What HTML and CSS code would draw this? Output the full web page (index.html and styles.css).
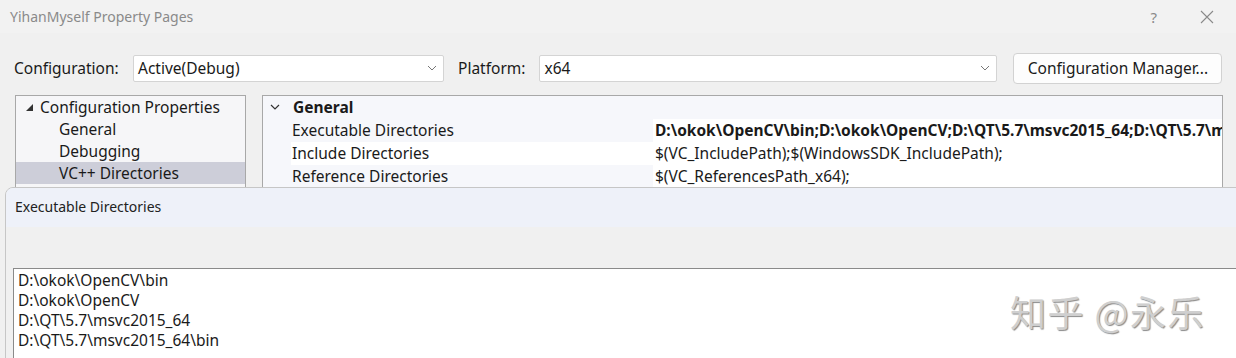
FILE: index.html
```html
<!DOCTYPE html>
<html lang="en">
<head>
  <meta charset="UTF-8">
  <title>YihanMyself Property Pages</title>
  <link rel="stylesheet" href="styles.css">
</head>
<body>
<div class="window">
  <div class="titlebar">
    <span class="title">YihanMyself Property Pages</span>
    <span class="help">?</span>
    <svg class="close" width="16" height="16" viewBox="0 0 16 16"><path d="M2 2L14 14M14 2L2 14" stroke="#8a8a8a" stroke-width="1.1" fill="none"/></svg>
  </div>

  <div class="config-row">
    <span class="lbl">Configuration:</span>
    <div class="select sel-config">
      <span>Active(Debug)</span>
      <svg width="10" height="6" viewBox="0 0 10 6"><path d="M1 1L5 5L9 1" stroke="#777" stroke-width="1" fill="none"/></svg>
    </div>
    <span class="lbl lbl-platform">Platform:</span>
    <div class="select sel-platform">
      <span>x64</span>
      <svg width="10" height="6" viewBox="0 0 10 6"><path d="M1 1L5 5L9 1" stroke="#777" stroke-width="1" fill="none"/></svg>
    </div>
    <button class="cfg-btn">Configuration Manager...</button>
  </div>

  <div class="panels">
    <div class="tree">
      <div class="node root">
        <svg width="9" height="9" viewBox="0 0 9 9"><polygon points="8,1 8,8 1,8" fill="#333"/></svg>
        <span>Configuration Properties</span>
      </div>
      <div class="node child">General</div>
      <div class="node child">Debugging</div>
      <div class="node child selected">VC++ Directories</div>
    </div>
    <div class="props">
      <div class="group">
        <svg width="10" height="6" viewBox="0 0 10 6"><path d="M1 1L5 5L9 1" stroke="#333" stroke-width="1.2" fill="none"/></svg>
        <span>General</span>
      </div>
      <div class="prow">
        <div class="pname">Executable Directories</div>
        <div class="pval bold">D:\okok\OpenCV\bin;D:\okok\OpenCV;D:\QT\5.7\msvc2015_64;D:\QT\5.7\m</div>
      </div>
      <div class="prow white">
        <div class="pname">Include Directories</div>
        <div class="pval">$(VC_IncludePath);$(WindowsSDK_IncludePath);</div>
      </div>
      <div class="prow">
        <div class="pname">Reference Directories</div>
        <div class="pval">$(VC_ReferencesPath_x64);</div>
      </div>
    </div>
  </div>

  <div class="dialog">
    <div class="dlg-head">Executable Directories</div>
    <div class="dlg-band"></div>
    <div class="editor">
      <div>D:\okok\OpenCV\bin</div>
      <div>D:\okok\OpenCV</div>
      <div>D:\QT\5.7\msvc2015_64</div>
      <div>D:\QT\5.7\msvc2015_64\bin</div>
    </div>
  </div>

  <div class="watermark">知乎 @永乐</div>
</div>
</body>
</html>
```

FILE: styles.css
```css
body {
  margin: 0;
  background: #f0f0f0;
  font-family: "Noto Sans", "Open Sans", sans-serif;
  color: #1a1a1a;
}
.window {
  position: relative;
  width: 1236px;
  height: 358px;
  overflow: hidden;
  background: #f0f0f0;
}
.titlebar {
  height: 33px;
  display: flex;
  align-items: center;
  padding-left: 10px;
  background: #f2f2f2;
}
.title {
  font-size: 14px;
  color: #8a8a8a;
  flex: 1;
}
.help {
  font-size: 15px;
  color: #8a8a8a;
  margin-right: 42px;
}
.close {
  margin-right: 21px;
}
.config-row {
  display: flex;
  align-items: center;
  height: 32px;
  margin-top: 19px;
  padding-left: 14px;
  font-size: 15.5px;
}
.lbl {
  width: 119px;
}
.lbl-platform {
  width: auto;
  margin-left: 14px;
  margin-right: 14px;
}
.select {
  height: 27px;
  box-sizing: border-box;
  background: #fff;
  border: 1px solid #d4d4d4;
  border-radius: 2px;
  display: flex;
  align-items: center;
  justify-content: space-between;
  padding: 0 6px 0 4px;
}
.sel-config { width: 311px; }
.sel-platform { width: 458px; }
.cfg-btn {
  margin-left: 16px;
  width: 209px;
  height: 31px;
  background: #fdfdfd;
  border: 1px solid #d2d2d2;
  border-radius: 4px;
  font-family: inherit;
  font-size: 15.5px;
  color: #1a1a1a;
  padding: 0;
}
.panels {
  display: flex;
  margin-top: 11px;
  padding-left: 15px;
  gap: 16px;
  height: 110px;
}
.tree {
  width: 231px;
  box-sizing: border-box;
  background: #f6f6f8;
  border: 1px solid #a8a8a8;
  font-size: 15.5px;
}
.node {
  height: 22px;
  line-height: 22px;
  white-space: nowrap;
}
.root {
  display: flex;
  align-items: center;
  padding-left: 9px;
  gap: 6px;
}
.child {
  padding-left: 43px;
}
.selected {
  background: #cdced9;
}
.props {
  width: 961px;
  box-sizing: border-box;
  background: #f6f7fb;
  border: 1px solid #a8a8a8;
  font-size: 15.5px;
}
.group {
  height: 21px;
  display: flex;
  align-items: center;
  padding-left: 7px;
  gap: 13px;
  font-weight: bold;
  margin-bottom: 2px;
}
.prow {
  display: flex;
  height: 23px;
  line-height: 23px;
  white-space: nowrap;
  margin-left: 28px;
}
.pname {
  width: 361px;
  flex: none;
  padding-left: 1px;
}
.pval {
  flex: 1;
  overflow: hidden;
  background: #fff;
  padding-left: 2px;
}
.prow.white .pname { background: #fff; }
.bold { font-weight: bold; }
.dialog {
  position: absolute;
  left: 5px;
  top: 187px;
  right: -10px;
  bottom: -10px;
  background: #f0f0f0;
  border: 1px solid #c6c6c6;
  border-radius: 8px 0 0 0;
  overflow: hidden;
}
.dlg-head {
  height: 39px;
  line-height: 38px;
  background: #eef1f9;
  padding-left: 9px;
  font-size: 14px;
  color: #222;
}
.dlg-band {
  height: 41px;
  background: #f0f0f0;
}
.editor {
  margin-left: 7px;
  height: 100px;
  background: #fff;
  border-top: 1px solid #8a8a8a;
  border-left: 1px solid #8a8a8a;
  padding: 1px 0 0 4px;
  font-size: 15.5px;
  line-height: 20px;
}
.watermark {
  position: absolute;
  left: 1010px;
  top: 285px;
  font-family: "Noto Sans CJK SC", sans-serif;
  font-size: 36px;
  color: #cfcfcf;
  text-shadow: 1px 1px 1px #8a8a8a;
  letter-spacing: 1.5px;
}
```
